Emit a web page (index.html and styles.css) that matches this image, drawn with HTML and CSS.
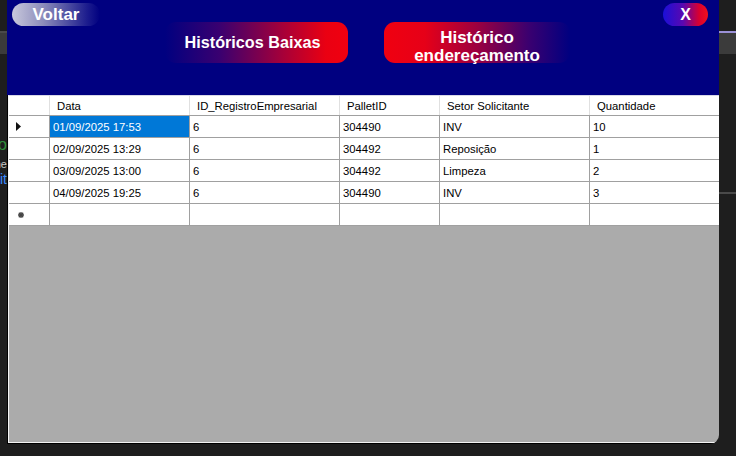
FILE: index.html
```html
<!DOCTYPE html>
<html lang="pt-BR">
<head>
<meta charset="utf-8">
<title>Históricos</title>
<link rel="stylesheet" href="styles.css">
</head>
<body>
<div class="side side-left">
  <div class="band"></div>
  <div class="code">
    <div class="code-line green">Co</div>
    <div class="code-line grey">ne</div>
    <div class="code-line blue">it</div>
  </div>
</div>
<div class="window">
  <header class="head">
    <button class="btn btn-back">Voltar</button>
    <button class="btn btn-main btn-baixas">Históricos Baixas</button>
    <button class="btn btn-main btn-end">Histórico<br>endereçamento</button>
    <button class="btn btn-close">X</button>
  </header>
  <div class="panel">
    <div class="area">
      <div class="grid">
        <div class="row hdr">
          <div class="rh"></div>
          <div class="c hc">Data</div>
          <div class="c hc">ID_RegistroEmpresarial</div>
          <div class="c hc">PalletID</div>
          <div class="c hc">Setor Solicitante</div>
          <div class="c hc">Quantidade</div>
        </div>
        <div class="row">
          <div class="rh"><svg class="arrow" width="6" height="9" viewBox="0 0 6 9"><path d="M0 0 L5 4.5 L0 9 Z" fill="#111"/></svg></div>
          <div class="c sel">01/09/2025 17:53</div>
          <div class="c">6</div>
          <div class="c">304490</div>
          <div class="c">INV</div>
          <div class="c">10</div>
        </div>
        <div class="row">
          <div class="rh"></div>
          <div class="c">02/09/2025 13:29</div>
          <div class="c">6</div>
          <div class="c">304492</div>
          <div class="c">Reposição</div>
          <div class="c">1</div>
        </div>
        <div class="row">
          <div class="rh"></div>
          <div class="c">03/09/2025 13:00</div>
          <div class="c">6</div>
          <div class="c">304492</div>
          <div class="c">Limpeza</div>
          <div class="c">2</div>
        </div>
        <div class="row">
          <div class="rh"></div>
          <div class="c">04/09/2025 19:25</div>
          <div class="c">6</div>
          <div class="c">304490</div>
          <div class="c">INV</div>
          <div class="c">3</div>
        </div>
        <div class="row">
          <div class="rh"><svg class="star" width="6" height="6" viewBox="0 0 6 6"><path d="M3 0 V6 M0 3 H6 M0.8 0.8 L5.2 5.2 M5.2 0.8 L0.8 5.2" stroke="#444" stroke-width="1.3"/></svg></div>
          <div class="c"></div>
          <div class="c"></div>
          <div class="c"></div>
          <div class="c"></div>
          <div class="c"></div>
        </div>
      </div>
    </div>
  </div>
</div>
<div class="side side-right">
  <div class="band"></div>
  <div class="line2"></div>
</div>
</body>
</html>
```

FILE: styles.css
```css
* { box-sizing: border-box; }
html, body { margin: 0; padding: 0; }
body {
  width: 736px;
  height: 456px;
  background: #1e1e1e;
  display: flex;
  align-items: flex-start;
  overflow: hidden;
  font-family: "Liberation Sans", Arial, sans-serif;
}

/* desktop strips around the window */
.side { height: 456px; overflow: hidden; }
.side-left { width: 7px; }
.side-right { flex: 1; }
.band {
  margin-top: 31px;
  height: 23px;
  background: #3b3b3b;
  border-top: 2px solid #4a4a4a;
}
.side-right .band { border-top-color: #9a90d6; }
.line2 { margin-top: 138px; height: 2px; background: #4a4a4a; }
.code { margin-top: 78px; display: flex; flex-direction: column; }
.code-line {
  display: flex;
  justify-content: flex-end;
  white-space: nowrap;
  overflow: hidden;
}
.code-line.green { color: #2f8f3a; font-size: 16px; height: 26px; line-height: 26px; }
.code-line.grey { color: #c8c8c8; height: 13px; line-height: 13px; font-size: 11px; }
.code-line.blue { color: #3b8cff; font-size: 14px; height: 17px; line-height: 17px; }

/* window */
.window {
  width: 712px;
  height: 444px;
  display: flex;
  flex-direction: column;
  border-bottom-right-radius: 9px;
  overflow: hidden;
}
.head {
  height: 95px;
  flex: none;
  background: #000080;
  display: flex;
  align-items: flex-start;
  padding-top: 3px;
}
.btn {
  border: 0;
  padding: 0;
  color: #fff;
  font-family: "Liberation Sans", Arial, sans-serif;
  font-weight: bold;
  cursor: pointer;
}
.btn-back {
  margin-left: 5px;
  width: 88px;
  height: 23px;
  border-radius: 12px;
  font-size: 17px;
  line-height: 23px;
  background: linear-gradient(to right, #c9c9dc 0%, #8d8dbb 35%, #1d1d8e 85%, #000080 100%);
}
.btn-main {
  margin-top: 19px;
  height: 41px;
  border-radius: 11px;
}
.btn-baixas {
  margin-left: 65px;
  width: 183px;
  font-size: 16.2px;
  padding-right: 8px;
  background: linear-gradient(to right, #000080 0%, #3a0070 30%, #a80038 65%, #ea0012 88%, #f00010 100%);
}
.btn-end {
  margin-left: 36px;
  width: 186px;
  font-size: 17px;
  line-height: 18px;
  padding-top: 7px;
  background: linear-gradient(to right, #f00010 0%, #e60018 22%, #9c0040 50%, #3a0070 78%, #000080 100%);
}
.btn-close {
  margin-left: auto;
  margin-right: 11px;
  width: 45px;
  height: 23px;
  border-radius: 12px;
  font-size: 16px;
  background: linear-gradient(to right, #1a10d8 0%, #5a08b0 45%, #d80030 80%, #f0101c 100%);
}

/* grid panel */
.panel {
  flex: 1;
  border-left: 1px solid #000;
  border-bottom: 1px solid #000;
  display: flex;
}
.area {
  flex: 1;
  background: #ababab;
  border-left: 1px solid #f4f4f4;
  border-bottom: 1px solid #f4f4f4;
  border-top: 1px solid #d8d8e8;
  overflow: hidden;
}
.grid {
  display: flex;
  flex-direction: column;
  width: 731px;
}
.row {
  display: grid;
  grid-template-columns: 41px 140px 150px 100px 150px 150px;
  height: 22px;
  background: #fff;
  border-bottom: 1px solid #a0a0a0;
}
.row.hdr { height: 20px; }
.rh {
  border-right: 1px solid #a0a0a0;
  display: flex;
  align-items: center;
}
.arrow { margin-left: 7px; }
.star { margin-left: 9px; }
.c {
  border-right: 1px solid #a0a0a0;
  font-size: 11.3px;
  color: #000;
  padding-left: 3px;
  display: flex;
  align-items: center;
  white-space: nowrap;
  overflow: hidden;
}
.hdr .rh, .hdr .c { border-right-color: #e0e0e0; }
.hc { padding-left: 7px; }
.c.sel { background: #0078d7; color: #fff; }
```
